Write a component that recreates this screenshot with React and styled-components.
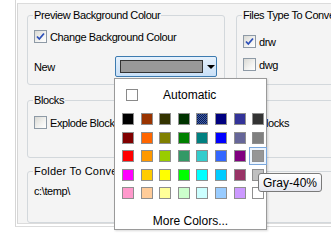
import styled, { createGlobalStyle } from "styled-components";

const GlobalStyle = createGlobalStyle`
  html, body {
    margin: 0;
    padding: 0;
    background: #ffffff;
    overflow: hidden;
  }
  body {
    font-family: "Liberation Sans", Arial, sans-serif;
    font-size: 11px;
    letter-spacing: -0.4px;
    color: #000;
  }
`;

const colors = [
  ["#000000", "#993300", "#333300", "#003300", "dither", "#000080", "#333399", "#333333"],
  ["#800000", "#ff6600", "#808000", "#008000", "#008080", "#0000ff", "#666699", "#808080"],
  ["#ff0000", "#ff9900", "#99cc00", "#339966", "#33cccc", "#3366ff", "#800080", "#969696"],
  ["#ff00ff", "#ffcc00", "#ffff00", "#00ff00", "#00ffff", "#00ccff", "#993366", "#c0c0c0"],
  ["#ff99cc", "#ffcc99", "#ffff99", "#ccffcc", "#ccffff", "#99ccff", "#cc99ff", "#ffffff"],
];

const Page = styled.div`
  position: relative;
  width: 331px;
  height: 246px;
  padding-left: 15px;
  box-sizing: border-box;
  overflow: hidden;
`;

const Frame = styled.div`
  width: 340px;
  height: 227px;
  border-left: 1px solid #d6d6d6;
  border-bottom: 1px solid #dcdcdc;
  box-sizing: border-box;
  padding: 3px 0 2px 1px;
`;

const Panel = styled.div`
  height: 100%;
  box-sizing: border-box;
  border-left: 1px solid #d6d6d6;
  border-top: 1px solid #dcdcdc;
  border-bottom: 1px solid #dcdcdc;
  background: #f4f4f4;
  padding: 5px 0 0 9px;
  display: flex;
  flex-direction: column;
`;

const TopRow = styled.div`
  display: flex;
  gap: 11px;
`;

const Group = styled.fieldset`
  margin: ${(p) => p.$top || 0}px 0 0 0;
  padding: 0 6px ${(p) => p.$bottom || 0}px 6px;
  border: 1px solid #d3d8dc;
  border-radius: 3px;
  min-width: 0;
  width: ${(p) => (p.$width ? `${p.$width}px` : "auto")};
  flex: ${(p) => (p.$width ? "none" : 1)};
  box-sizing: border-box;
`;

const Legend = styled.legend`
  padding: 0 1px;
  margin-left: -1px;
  line-height: 13px;
  white-space: nowrap;
  letter-spacing: ${(p) => (p.$wide ? "0.2px" : "inherit")};
`;

const CheckRow = styled.label`
  display: flex;
  align-items: center;
  gap: 3px;
  height: 13px;
  margin-top: ${(p) => p.$top || 0}px;
  white-space: nowrap;
`;

const Box = styled.span`
  width: 13px;
  height: 13px;
  box-sizing: border-box;
  border: 1px solid #8e9aa6;
  background: linear-gradient(135deg, #d9d9d4 0%, #f3f3f1 60%, #ffffff 100%);
  display: flex;
  align-items: center;
  justify-content: center;
  flex: none;
`;

const Check = ({ on, label, top }) => (
  <CheckRow $top={top}>
    <Box>
      {on && (
        <svg width="9" height="9" viewBox="0 0 9 9">
          <path d="M1 4.5 L3.3 7 L8 1.5" fill="none" stroke="#2c4fb8" strokeWidth="1.8" />
        </svg>
      )}
    </Box>
    {label}
  </CheckRow>
);

const NewRow = styled.div`
  display: flex;
  align-items: center;
  margin-top: 13px;
  height: 21px;
`;

const NewLabel = styled.span`
  width: 81px;
`;

const Combo = styled.div`
  width: 102px;
  height: 21px;
  box-sizing: border-box;
  border: 1px solid #3d7bb0;
  border-radius: 2px;
  background: linear-gradient(#e6f1fc, #c9e0f7);
  display: flex;
  align-items: center;
  padding: 0 0 0 4px;
`;

const ComboSwatch = styled.div`
  width: 83px;
  height: 13px;
  box-sizing: border-box;
  border: 1px solid #333;
  background: #999999;
`;

const Arrow = styled.div`
  margin-left: 4px;
  width: 0;
  height: 0;
  border-left: 4px solid transparent;
  border-right: 4px solid transparent;
  border-top: 4px solid #000;
`;

const TwoCols = styled.div`
  display: grid;
  grid-template-columns: 209px auto;
`;

const PathText = styled.div`
  margin-top: 7px;
  line-height: 13px;
`;

const Popup = styled.div`
  position: absolute;
  left: 114px;
  top: 78px;
  width: 153px;
  height: 152px;
  box-sizing: border-box;
  background: #ffffff;
  border: 1px solid #9a9a9a;
  box-shadow: 1px 1px 2px rgba(0, 0, 0, 0.15);
  font-size: 12px;
  letter-spacing: 0;
  display: flex;
  flex-direction: column;
`;

const AutoRow = styled.div`
  display: flex;
  align-items: center;
  height: 12px;
  margin: 10px 0 0 11px;
`;

const AutoBox = styled.span`
  width: 12px;
  height: 12px;
  box-sizing: border-box;
  border: 1px solid #8a8a8a;
  background: #fff;
  margin-right: 25px;
`;

const Grid = styled.div`
  display: grid;
  grid-template-columns: repeat(8, 12px);
  column-gap: 6.6px;
  row-gap: 6.5px;
  margin: 12px 0 0 7px;
`;

const Swatch = styled.div`
  width: 12px;
  height: 12px;
  box-sizing: border-box;
  border: 1px solid #8f8f8f;
  background: ${(p) =>
    p.$color === "dither"
      ? "repeating-conic-gradient(#0c1b52 0 25%, #3c5ea8 0 50%) 0 0 / 2px 2px"
      : p.$color};
  box-shadow: ${(p) => (p.$active ? "0 0 0 2px #eef5fd, 0 0 0 3px #7aa7dc" : "none")};
`;

const MoreColors = styled.div`
  text-align: center;
  margin-top: 15px;
  line-height: 14px;
`;

const Tooltip = styled.div`
  position: absolute;
  left: 258px;
  top: 173px;
  width: 64px;
  height: 19px;
  box-sizing: border-box;
  border: 1px solid #7a7a7a;
  border-radius: 3px;
  background: linear-gradient(#ffffff, #e6e7ef);
  font-size: 12px;
  letter-spacing: 0;
  display: flex;
  align-items: center;
  justify-content: center;
`;

export default function App() {
  return (
    <Page>
      <GlobalStyle />
      <Frame>
        <Panel>
          <TopRow>
            <Group $width={198} $bottom={7}>
              <Legend>Preview Background Colour</Legend>
              <Check on label="Change Background Colour" top={8} />
              <NewRow>
                <NewLabel>New</NewLabel>
                <Combo>
                  <ComboSwatch />
                  <Arrow />
                </Combo>
              </NewRow>
            </Group>
            <Group>
              <Legend>Files Type To Convert</Legend>
              <Check on label="drw" top={13} />
              <Check label="dwg" top={10} />
            </Group>
          </TopRow>
          <Group $top={9} $bottom={10}>
            <Legend>Blocks</Legend>
            <TwoCols>
              <Check label="Explode Blocks" top={9} />
              <Check label="Blocks" top={9} />
            </TwoCols>
          </Group>
          <Group $top={7} $bottom={5}>
            <Legend $wide>Folder To Convert</Legend>
            <PathText>c:\temp\</PathText>
          </Group>
        </Panel>
      </Frame>
      <Popup>
        <AutoRow>
          <AutoBox />
          Automatic
        </AutoRow>
        <Grid>
          {colors.flat().map((c, i) => (
            <Swatch key={i} $color={c} $active={i === 23} />
          ))}
        </Grid>
        <MoreColors>More Colors...</MoreColors>
      </Popup>
      <Tooltip>Gray-40%</Tooltip>
    </Page>
  );
}
